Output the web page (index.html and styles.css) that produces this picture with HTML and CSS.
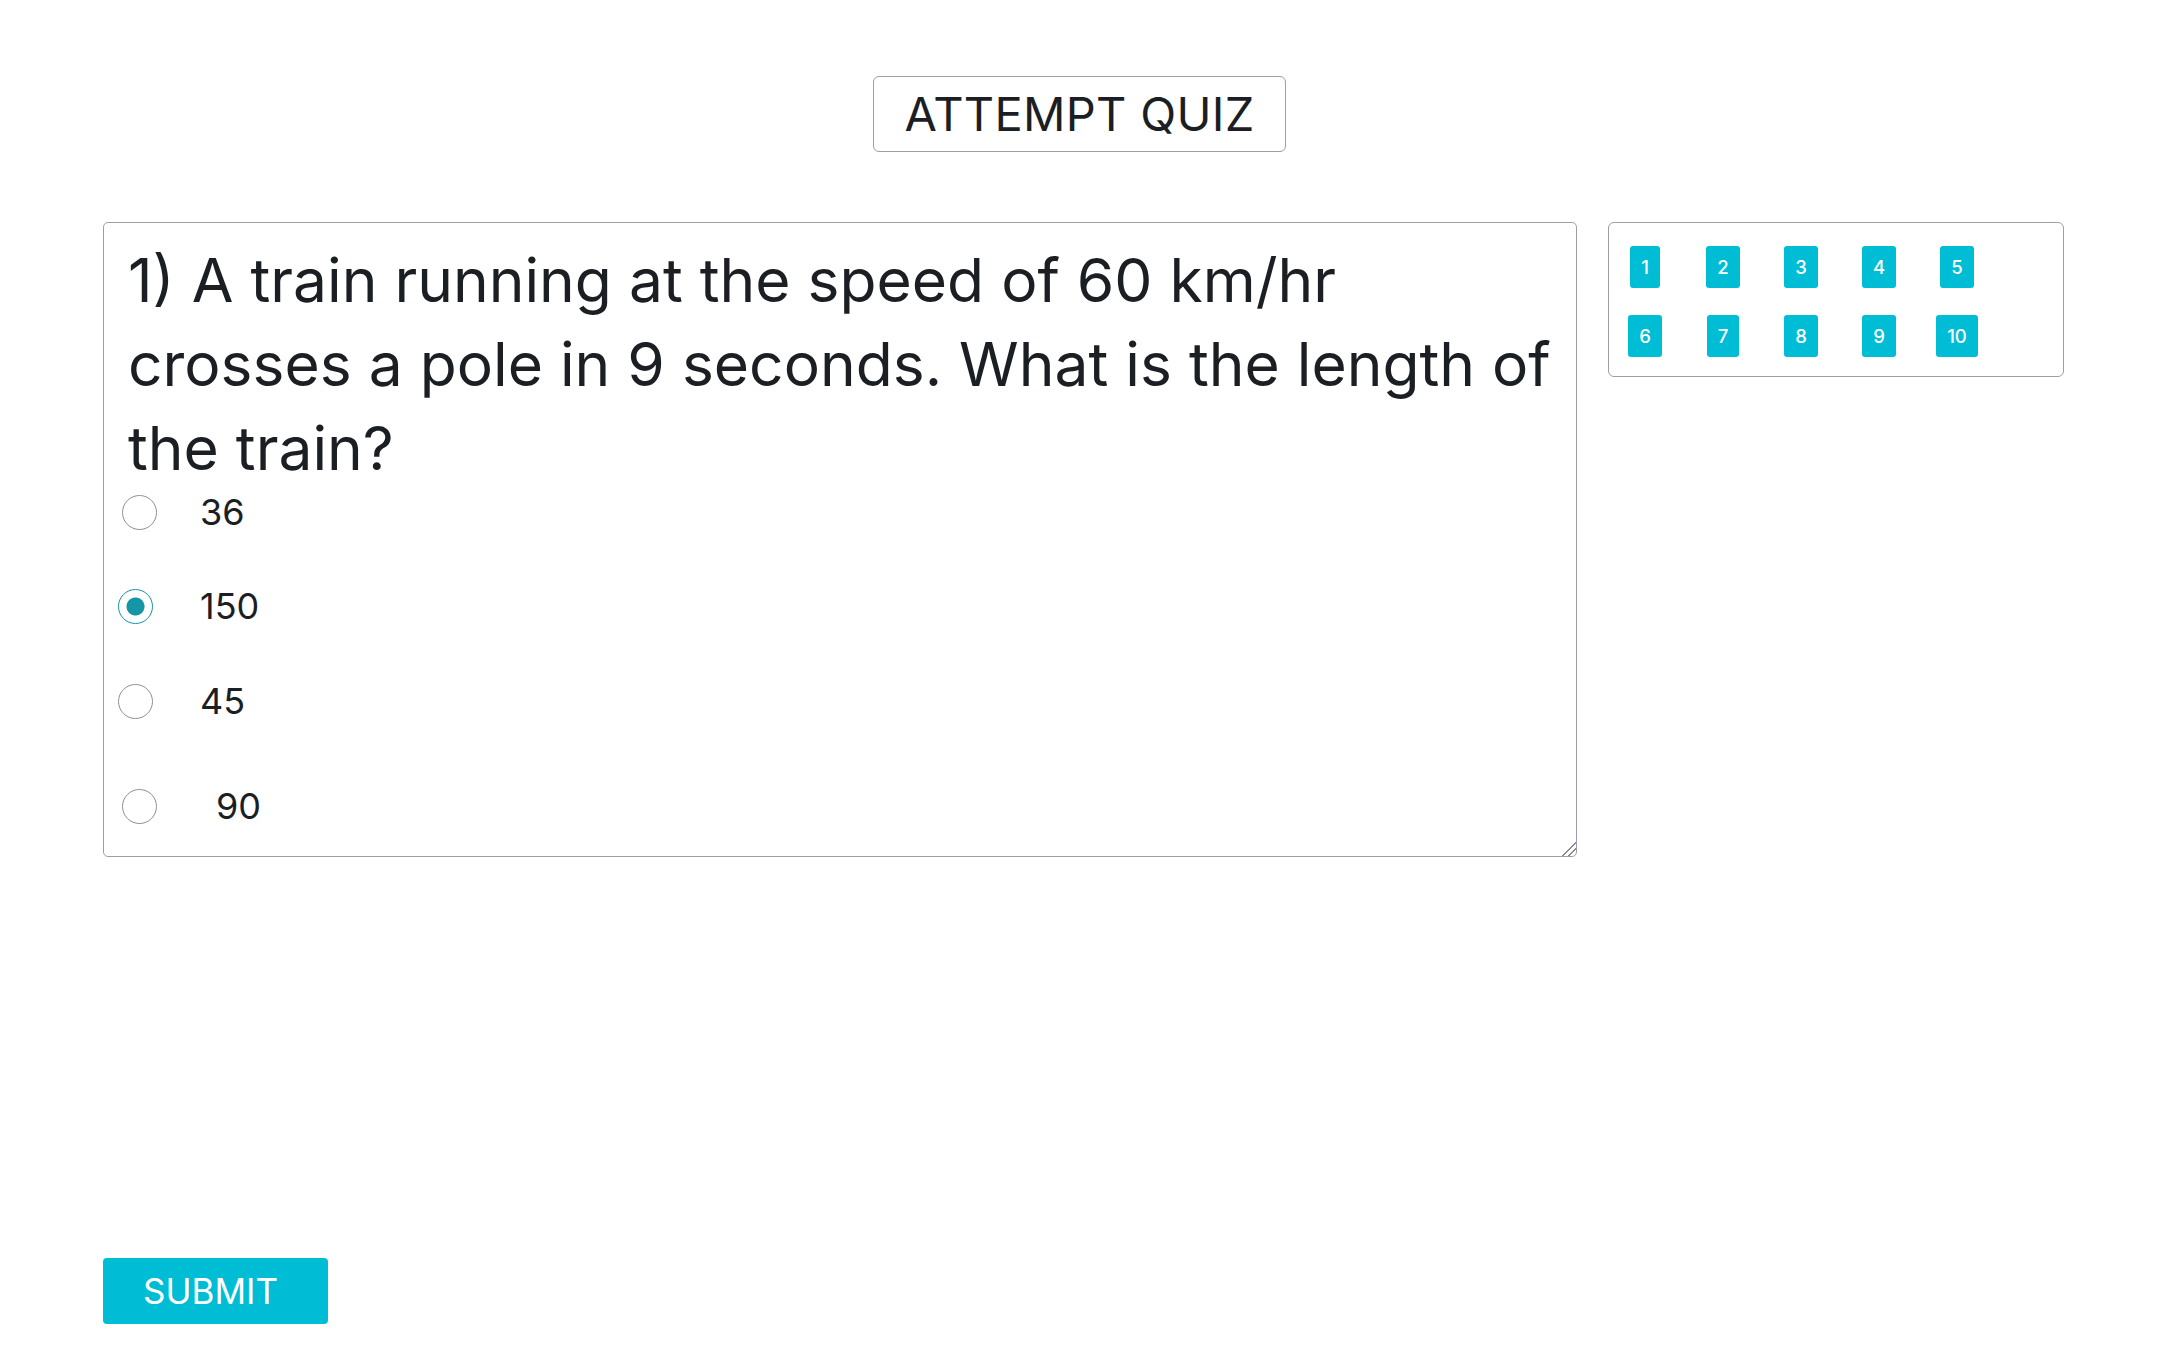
FILE: index.html
```html
<!DOCTYPE html>
<html lang="en">
<head>
<meta charset="utf-8">
<title>Attempt Quiz</title>
<link rel="stylesheet" href="styles.css">
</head>
<body>
<div class="page">
  <header class="header">
    <h1 class="title">ATTEMPT QUIZ</h1>
  </header>
  <main class="main">
    <section class="question">
      <p class="question-text">1) A train running at the speed of 60 km/hr<br>crosses a pole in 9 seconds. What is the length of<br>the train?</p>
      <label class="option option-first option-shift"><input type="radio" name="q1" class="radio"><span class="opt-text">36</span></label>
      <label class="option option-second"><input type="radio" name="q1" class="radio" checked><span class="opt-text">150</span></label>
      <label class="option option-third"><input type="radio" name="q1" class="radio"><span class="opt-text">45</span></label>
      <label class="option option-fourth option-shift"><input type="radio" name="q1" class="radio"><span class="opt-text opt-text-indent">90</span></label>
    </section>
    <aside class="nav">
      <div class="nav-row">
        <span class="slot"><button class="qbtn">1</button></span>
        <span class="slot"><button class="qbtn">2</button></span>
        <span class="slot"><button class="qbtn">3</button></span>
        <span class="slot"><button class="qbtn">4</button></span>
        <span class="slot"><button class="qbtn">5</button></span>
      </div>
      <div class="nav-row">
        <span class="slot"><button class="qbtn">6</button></span>
        <span class="slot"><button class="qbtn">7</button></span>
        <span class="slot"><button class="qbtn">8</button></span>
        <span class="slot"><button class="qbtn">9</button></span>
        <span class="slot"><button class="qbtn">10</button></span>
      </div>
    </aside>
  </main>
  <button class="submit">SUBMIT</button>
</div>
</body>
</html>
```
FILE: styles.css
```css
* { box-sizing: border-box; }

html, body {
  margin: 0;
  padding: 0;
  background: #ffffff;
}

body {
  font-family: Inter, "Noto Sans", "Liberation Sans", sans-serif;
  color: #1b1e22;
}

.page {
  padding: 76px 96px 0 103px;
}

.header {
  display: flex;
  justify-content: center;
}

.title {
  margin: 0 8px 0 0;
  font-size: 47px;
  font-weight: 400;
  line-height: 74px;
  padding: 0 30px;
  border: 1px solid #9d9dad;
  border-radius: 6px;
  letter-spacing: 0.3px;
}

.main {
  display: flex;
  align-items: flex-start;
  gap: 31px;
  margin-top: 70px;
}

.question {
  flex: 0 0 1474px;
  height: 635px;
  border: 1px solid #9d9dad;
  border-radius: 5px;
  padding: 15px 8px 0 24px;
  resize: both;
  overflow: auto;
}

.question::-webkit-resizer {
  background:
    linear-gradient(135deg, transparent 0 52%, #8a8a96 52% 60%, transparent 60% 72%, #8a8a96 72% 80%, transparent 80%);
}

.question-text {
  margin: 0;
  font-size: 60.5px;
  line-height: 84px;
  font-weight: 400;
  white-space: nowrap;
}

.option {
  display: grid;
  grid-template-columns: 82px auto;
  align-items: center;
  height: 44px;
  margin-left: -10px;
}

.option-second { margin-top: 50px; }
.option-third { margin-top: 51px; }
.option-fourth { margin-top: 61px; }

.radio {
  appearance: none;
  -webkit-appearance: none;
  margin: 0;
  width: 35px;
  height: 35px;
  border: 1.5px solid #8f8f9d;
  border-radius: 50%;
  background: #fff;
}

.option-shift .radio { margin-left: 4px; }

.radio:checked {
  border-color: #1596a6;
  background: radial-gradient(circle, #1596a6 0 8.5px, #ffffff 9.5px);
}

.opt-text {
  font-size: 36px;
  line-height: 44px;
}

.opt-text-indent { padding-left: 16px; }

.nav {
  flex: 0 0 456px;
  height: 155px;
  border: 1px solid #9d9dad;
  border-radius: 6px;
  padding: 23px 0 0 16px;
  display: flex;
  flex-direction: column;
  gap: 27px;
}

.nav-row {
  display: flex;
  gap: 38px;
}

.slot {
  width: 40px;
  display: flex;
  justify-content: center;
}

.qbtn {
  height: 42px;
  padding: 0 11px;
  border: none;
  border-radius: 3px;
  background: #00bdd6;
  color: #ffffff;
  font-family: Inter, "Noto Sans", sans-serif;
  font-size: 18.5px;
  font-weight: 500;
  line-height: 42px;
  white-space: nowrap;
}

.submit {
  display: block;
  margin-top: 401px;
  width: 225px;
  height: 66px;
  padding: 0 0 0 40px;
  text-align: left;
  border: none;
  border-radius: 4px;
  background: #00bdd6;
  color: #ffffff;
  font-family: Inter, "Noto Sans", sans-serif;
  font-size: 35px;
}
```
